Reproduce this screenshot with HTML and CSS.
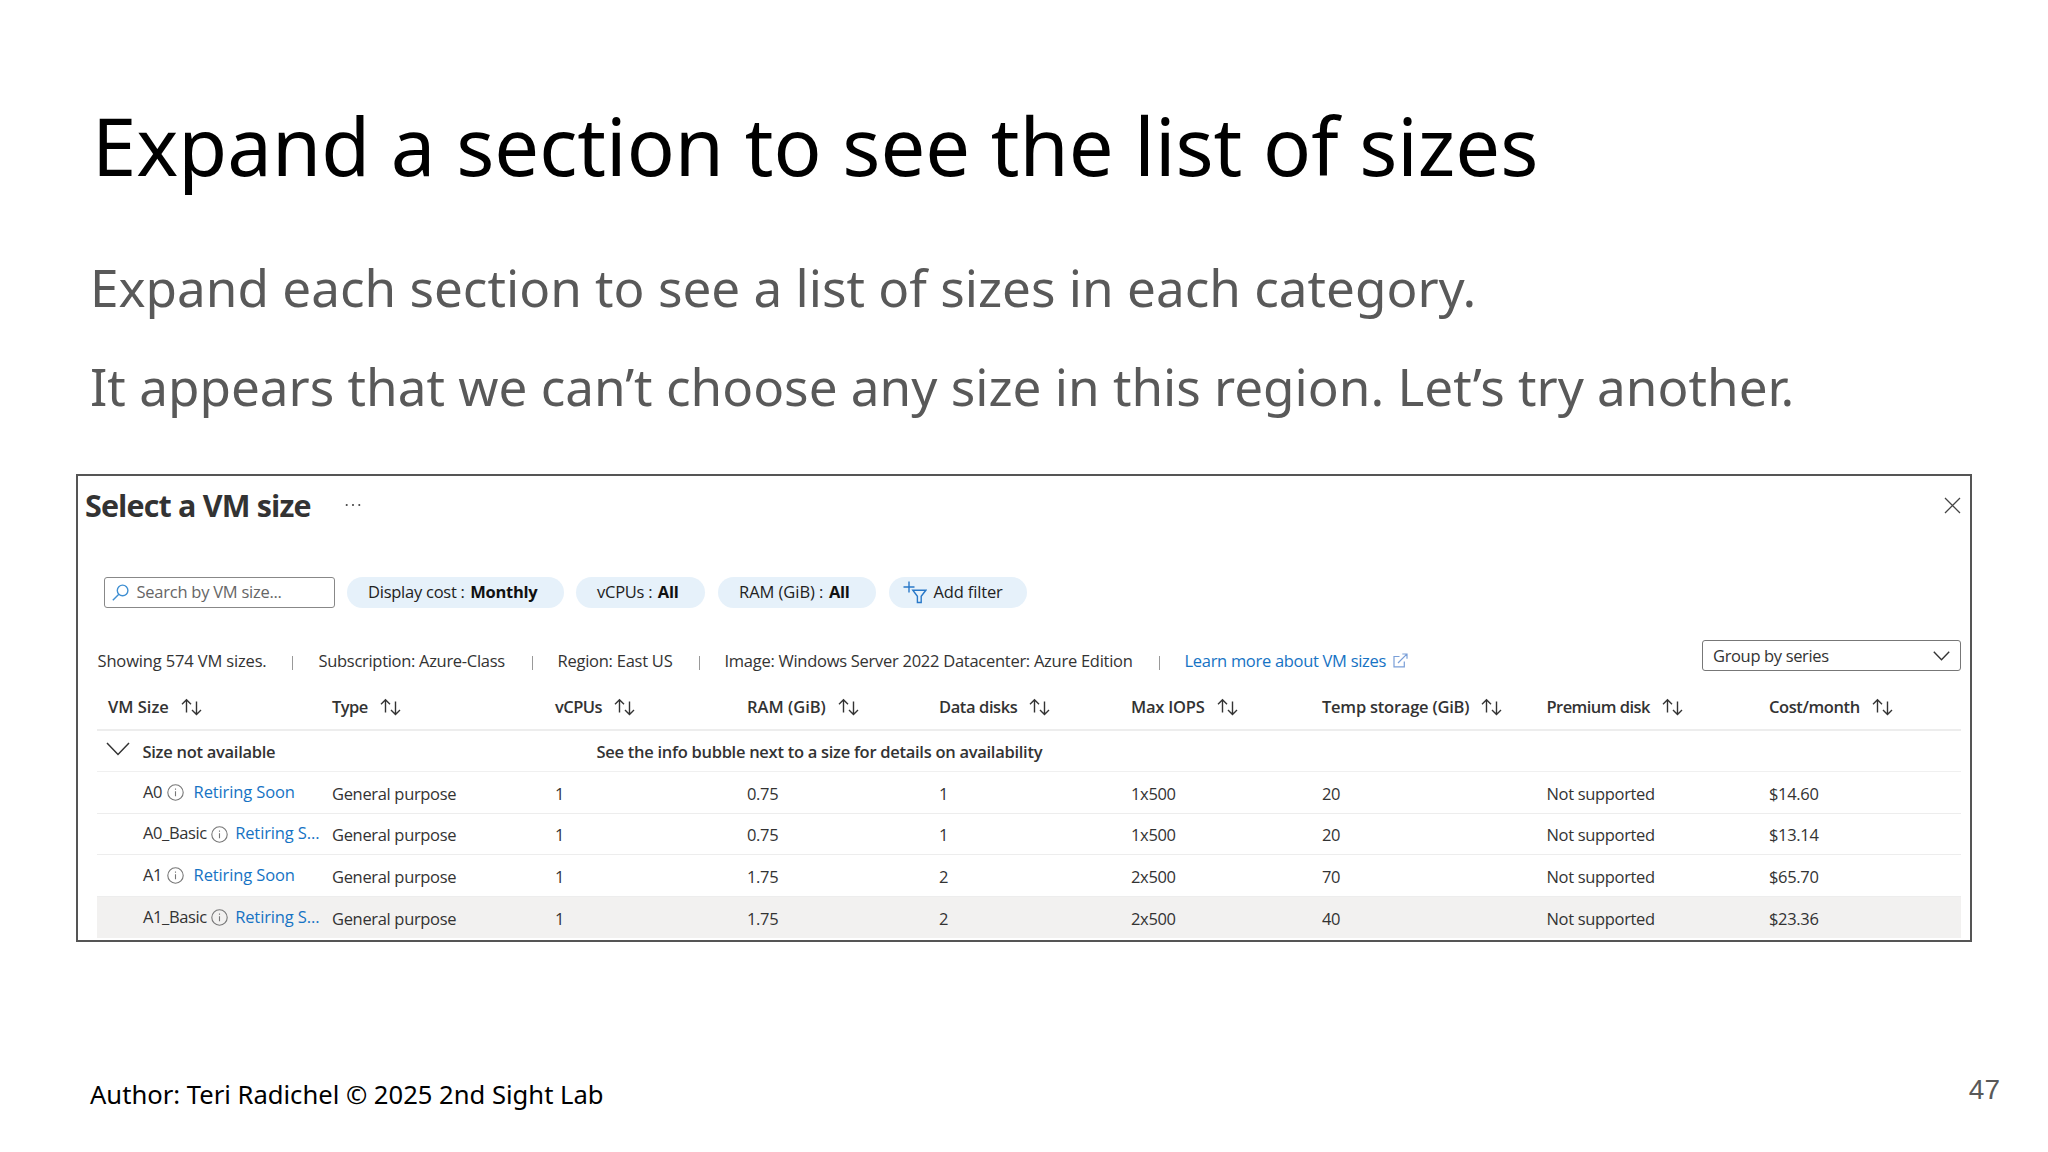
FILE: index.html
```html
<!DOCTYPE html>
<html lang="en">
<head>
<meta charset="utf-8">
<title>Expand a section to see the list of sizes</title>
<link rel="stylesheet" href="styles.css">
</head>
<body>
<svg class="defs" width="0" height="0" aria-hidden="true">
  <symbol id="sort" viewBox="0 0 21 18"><path d="M5.5 14.5V1.8M1 6.2l4.5-4.5L10 6.2M15.5 3.5v12.8M11 12l4.5 4.5L20 12"/></symbol>
  <symbol id="info" viewBox="0 0 17 17"><circle cx="8.5" cy="8.5" r="7.7"/><path d="M8.5 7.2v5M8.5 4.4v1.3"/></symbol>
</svg>
<main class="slide">
  <h1 class="title">Expand a section to see the list of sizes</h1>
  <div class="body">
    <p>Expand each section to see a list of sizes in each category.</p>
    <p>It appears that we can’t choose any size in this region. Let’s try another.</p>
  </div>

  <section class="panel">
    <header class="panel-head">
      <h2>Select a VM size</h2>
      <svg class="dots" width="16" height="4" viewBox="0 0 16 4"><circle cx="1.7" cy="2" r="1.05"/><circle cx="8" cy="2" r="1.05"/><circle cx="14.3" cy="2" r="1.05"/></svg>
      <svg class="close" width="17" height="17" viewBox="0 0 17 17"><path d="M1 1l15 15M16 1L1 16"/></svg>
    </header>

    <div class="filters">
      <div class="search">
        <svg width="17" height="17" viewBox="0 0 17 17"><circle cx="10.6" cy="6.4" r="5.3"/><path d="M6.8 10.2L.8 16.2"/></svg>
        <span>Search by VM size...</span>
      </div>
      <div class="pill pill-cost"><span>Display cost :</span><b>Monthly</b></div>
      <div class="pill pill-cpu"><span>vCPUs :</span><b>All</b></div>
      <div class="pill pill-ram"><span>RAM (GiB) :</span><b>All</b></div>
      <div class="pill pill-add">
        <svg width="24" height="23" viewBox="0 0 24 23"><path d="M6 .5v11M.5 6h11M9.8 9.3h13l-4.6 6v6.2h-3.8v-6.2z"/></svg>
        <span>Add filter</span>
      </div>
    </div>

    <div class="summary">
      <div class="facts">
        <span class="loose">Showing 574 VM sizes.</span><i></i>
        <span class="tight">Subscription: Azure-Class</span><i></i>
        <span>Region: East US</span><i></i>
        <span class="image">Image: Windows Server 2022 Datacenter: Azure Edition</span><i></i>
        <a class="learn">Learn more about VM sizes<svg width="15" height="15" viewBox="0 0 15 15"><path d="M6.5 3.5H1v10.3h10.3V8.5M5 10l8.8-8.8M9.3 1h4.7v4.7"/></svg></a>
      </div>
      <div class="select">
        <span>Group by series</span>
        <svg width="17" height="10" viewBox="0 0 17 10"><path d="M.8.8l7.7 7.9L16.2.8"/></svg>
      </div>
    </div>

    <div class="table">
      <div class="row head">
        <div class="h-loose">VM Size<svg><use href="#sort"/></svg></div>
        <div class="h-tight">Type<svg><use href="#sort"/></svg></div>
        <div class="h-tight">vCPUs<svg><use href="#sort"/></svg></div>
        <div class="h-loose">RAM (GiB)<svg><use href="#sort"/></svg></div>
        <div class="h-mid">Data disks<svg><use href="#sort"/></svg></div>
        <div>Max IOPS<svg><use href="#sort"/></svg></div>
        <div>Temp storage (GiB)<svg><use href="#sort"/></svg></div>
        <div class="h-tight">Premium disk<svg><use href="#sort"/></svg></div>
        <div class="h-mid">Cost/month<svg><use href="#sort"/></svg></div>
      </div>
      <div class="group">
        <svg width="24" height="14" viewBox="0 0 24 14"><path d="M1 1l11 11.5L23 1"/></svg>
        <span class="group-name">Size not available</span>
        <span>See the info bubble next to a size for details on availability</span>
      </div>
      <div class="row">
        <div class="name"><span>A0</span><svg><use href="#info"/></svg><a class="full">Retiring Soon</a></div>
        <div>General purpose</div><div>1</div><div>0.75</div><div>1</div><div>1x500</div><div>20</div><div>Not supported</div><div>$14.60</div>
      </div>
      <div class="row">
        <div class="name"><span>A0_Basic</span><svg><use href="#info"/></svg><a>Retiring S...</a></div>
        <div>General purpose</div><div>1</div><div>0.75</div><div>1</div><div>1x500</div><div>20</div><div>Not supported</div><div>$13.14</div>
      </div>
      <div class="row">
        <div class="name"><span>A1</span><svg><use href="#info"/></svg><a class="full">Retiring Soon</a></div>
        <div>General purpose</div><div>1</div><div>1.75</div><div>2</div><div>2x500</div><div>70</div><div>Not supported</div><div>$65.70</div>
      </div>
      <div class="row hover">
        <div class="name"><span>A1_Basic</span><svg><use href="#info"/></svg><a>Retiring S...</a></div>
        <div>General purpose</div><div>1</div><div>1.75</div><div>2</div><div>2x500</div><div>40</div><div>Not supported</div><div>$23.36</div>
      </div>
    </div>
  </section>

  <footer class="foot">
    <span>Author: Teri Radichel © 2025 2nd Sight Lab</span>
    <span class="page">47</span>
  </footer>
</main>
</body>
</html>
```
FILE: styles.css
```css
* { box-sizing: border-box; }
body { margin: 0; background: #fff; }
h1, h2, p { margin: 0; font-weight: 400; }
svg { fill: none; stroke: currentColor; flex: none; display: block; }
.defs { position: absolute; }

.slide {
  width: 2048px;
  height: 1152px;
  padding: 91px 48px 0 76px;
  overflow: hidden;
  display: flex;
  flex-direction: column;
  font-family: "Noto Sans", sans-serif;
  color: #000;
}
.title { padding-left: 16px; font-size: 79.6px; line-height: 108px; white-space: nowrap; }
.body { padding: 39px 0 0 14px; font-size: 51.22px; line-height: 99px; color: #595959; white-space: nowrap; }

/* Azure size picker */
.panel {
  width: 1896px;
  height: 468px;
  margin-top: 38px;
  padding: 9px 9px 0 7px;
  border: 2px solid #555;
  font-family: "Open Sans", sans-serif;
  font-size: 16.5px;
  line-height: 20px;
  letter-spacing: -0.25px;
  color: #333;
  white-space: nowrap;
}
.panel-head { display: flex; align-items: center; height: 40px; }
.panel-head h2 { width: 260px; font-size: 30.5px; font-weight: 700; line-height: 40px; letter-spacing: -0.85px; }
.dots { fill: #444; stroke: none; }
.close { margin-left: auto; color: #444; stroke-width: 1.3; }

.filters { display: flex; height: 31px; margin: 52px 0 0 18.5px; }
.search {
  width: 231px;
  display: flex;
  align-items: center;
  gap: 8px;
  padding: 0 0 1px 7px;
  border: 1.5px solid #888;
  border-radius: 3px;
  color: #666;
}
.search svg { color: #3f8fd2; stroke-width: 1.4; }
.pill {
  display: flex;
  align-items: center;
  gap: 5.5px;
  padding: 0 0 1px 21px;
  border-radius: 16px;
  background: #e6f1fa;
  color: #222;
}
.pill b { color: #111; font-weight: 700; letter-spacing: -0.25px; }
.pill-cost { width: 217px; margin-left: 12.5px; }
.pill-cpu { width: 129px; margin-left: 12px; }
.pill-ram { width: 157.5px; margin-left: 13px; letter-spacing: -0.05px; }
.pill-add { width: 138px; margin-left: 13.5px; padding-left: 14px; gap: 6.5px; letter-spacing: -0.15px; }
.pill-add svg { color: #2878c8; stroke-width: 1.4; }

.summary { display: flex; justify-content: space-between; height: 42px; margin: 32px 0 0 12.5px; }
.facts {
  display: grid;
  grid-template-columns: 194.5px 26.5px 213px 26px 141px 26px 434px 26px auto;
  align-items: center;
}
.facts i { width: 1px; height: 14px; margin-top: 4px; background: #999; }
.loose { letter-spacing: -0.15px; }
.tight { letter-spacing: -0.3px; }
.image { letter-spacing: -0.27px; }
.learn { display: flex; align-items: center; gap: 7px; color: #1673c4; letter-spacing: -0.3px; }
.learn svg { margin-top: -1px; color: #7a9fd8; stroke-width: 1.2; }
.select {
  width: 259px;
  height: 31px;
  display: flex;
  align-items: center;
  justify-content: space-between;
  padding: 0 10px 0 10px;
  border: 1.5px solid #777;
  border-radius: 3px;
  letter-spacing: -0.35px;
}
.select svg { stroke-width: 1.4; }

.table { margin-left: 12px; }
.row {
  display: grid;
  grid-template-columns: 224px 223px 192px 192px 192px 191px 224.5px 222.5px auto;
  align-items: center;
  height: 41.5px;
  padding: 3px 0 0 11px;
  border-bottom: 1px solid #ededed;
}
.row > div { letter-spacing: -0.33px; }
.row.head { height: 49px; padding-top: 2px; border-bottom: 2px solid #ededed; font-weight: 600; }
.row.head > div { display: flex; align-items: center; gap: 12px; letter-spacing: -0.23px; }
.row.head > .h-mid { letter-spacing: -0.4px; }
.row.head > .h-tight { letter-spacing: -0.55px; }
.row.head > .h-loose { letter-spacing: 0; }
.head svg { width: 21px; height: 18px; stroke-width: 1.4; }
.group {
  display: flex;
  align-items: center;
  height: 41px;
  padding: 2px 0 0 9px;
  border-bottom: 1px solid #f0f0f0;
  font-weight: 600;
  letter-spacing: -0.28px;
}
.group svg { margin: -6px 12.5px 0 0; stroke-width: 1.5; }
.group-name { width: 454px; }
.row .name { display: flex; align-items: center; padding-left: 35px; margin-top: -4px; letter-spacing: -0.4px; }
.name svg { width: 17px; height: 17px; margin: 2px 7px 0 4.5px; color: #777; stroke-width: 1.1; }
.name a { color: #1673c4; letter-spacing: -0.12px; }
.name .full { margin-left: 3px; }
.row.hover { background: #f2f1f0; border-bottom: 0; }

.foot { display: flex; justify-content: space-between; margin-top: 130px; padding: 5px 0 0 14px; font-size: 25.6px; line-height: 36px; }
.page { margin-top: -5px; font: 28px/36px "Liberation Sans", sans-serif; color: #595959; }
```
